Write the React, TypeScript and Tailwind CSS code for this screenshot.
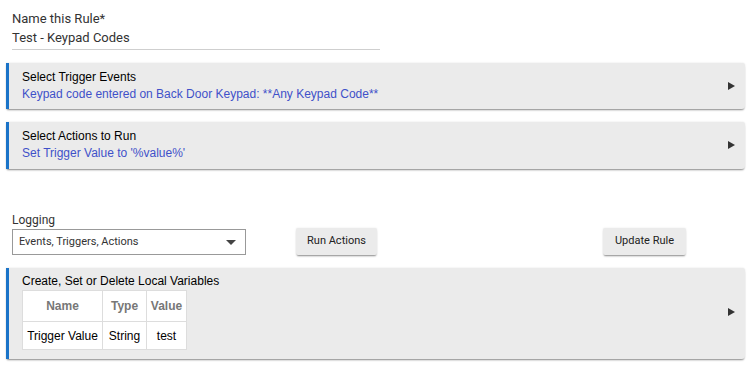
import React from "react";

const Arrow = () => (
  <svg width="7" height="8" viewBox="0 0 7 8" className="shrink-0">
    <path d="M0 0 L7 4 L0 8 Z" fill="#333" />
  </svg>
);

const cardCls =
  "bg-[#ebebeb] border-l-[3px] border-[#1a73c8] rounded-r-[3px] shadow-[0_2px_2px_-1px_rgba(0,0,0,0.45),0_0_2px_rgba(0,0,0,0.12)] pl-[13px] pr-[10px] flex items-center";

export default function App() {
  const arial = { fontFamily: '"Liberation Sans", Arial, sans-serif' };
  return (
    <div className="w-[749px] h-[370px] bg-white overflow-hidden" style={{ fontFamily: 'Roboto, sans-serif' }}>
      <div className="pl-[6px] pr-[4px] pt-[10px]">
        <div className="ml-[6px] w-[368px] border-b border-[#cfcfcf] pb-[2px]">
          <div className="text-[13px] leading-[18px] text-[#333]">Name this Rule*</div>
          <div className="text-[13px] leading-[18px] text-[#333] mt-[1px]">Test - Keypad Codes</div>
        </div>
        <div className={`mt-[13px] py-[6px] ${cardCls}`}>
          <div className="flex-1" style={arial}>
            <div className="text-[12px] leading-[17px] text-black">Select Trigger Events</div>
            <div className="text-[12px] leading-[17px] text-[#3f51c9]">Keypad code entered on Back Door Keypad: **Any Keypad Code**</div>
          </div>
          <Arrow />
        </div>
        <div className={`mt-[13px] pt-[6px] pb-[7px] ${cardCls}`}>
          <div className="flex-1" style={arial}>
            <div className="text-[12px] leading-[17px] text-black">Select Actions to Run</div>
            <div className="text-[12px] leading-[17px] text-[#3f51c9]">Set Trigger Value to '%value%'</div>
          </div>
          <Arrow />
        </div>
        <div className="mt-[43px] flex items-end">
          <div className="ml-[6px] w-[234px]">
            <div className="text-[12px] leading-[16px] text-[#333]">Logging</div>
            <div className="mt-[1px] h-[26px] border border-[#999] flex items-center pl-[6px] pr-[9px]">
              <span className="flex-1 text-[11px] text-[#333]">Events, Triggers, Actions</span>
              <svg width="10" height="5" viewBox="0 0 10 5"><path d="M0 0 L10 0 L5 5 Z" fill="#444" /></svg>
            </div>
          </div>
          <button className="ml-[50px] w-[81px] h-[27px] bg-[#ebebeb] rounded-[2px] text-[11px] text-[#222] shadow-[0_2px_2px_-1px_rgba(0,0,0,0.45),0_0_2px_rgba(0,0,0,0.1)]">Run Actions</button>
          <button className="ml-[226px] w-[83px] h-[27px] bg-[#ebebeb] rounded-[2px] text-[11px] text-[#222] shadow-[0_2px_2px_-1px_rgba(0,0,0,0.45),0_0_2px_rgba(0,0,0,0.1)]">Update Rule</button>
        </div>
        <div className={`mt-[13px] pt-[5px] pb-[9px] ${cardCls}`}>
          <div className="flex-1" style={arial}>
            <div className="text-[12px] leading-[17px] text-black">Create, Set or Delete Local Variables</div>
            <table className="bg-white border-collapse text-[12px]">
              <thead>
                <tr className="h-[31px]">
                  <th className="border border-[#ddd] w-[80px] font-bold text-[#777]">Name</th>
                  <th className="border border-[#ddd] w-[44px] font-bold text-[#777]">Type</th>
                  <th className="border border-[#ddd] w-[40px] font-bold text-[#777]">Value</th>
                </tr>
              </thead>
              <tbody>
                <tr className="h-[28px]">
                  <td className="border border-[#ddd] text-center text-black">Trigger Value</td>
                  <td className="border border-[#ddd] text-center text-black">String</td>
                  <td className="border border-[#ddd] text-center text-black">test</td>
                </tr>
              </tbody>
            </table>
          </div>
          <Arrow />
        </div>
      </div>
    </div>
  );
}
